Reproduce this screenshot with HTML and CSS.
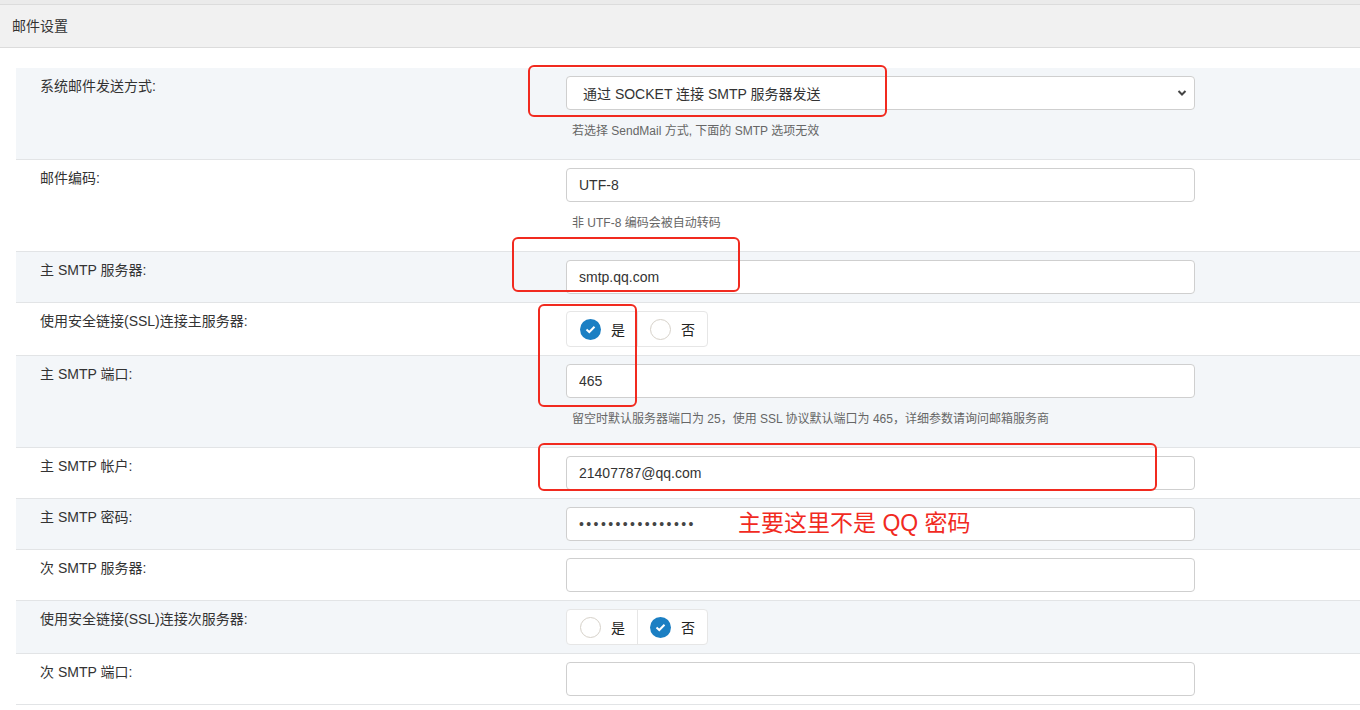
FILE: index.html
```html
<!DOCTYPE html>
<html lang="zh-CN">
<head>
<meta charset="utf-8">
<title>邮件设置</title>
<link rel="stylesheet" href="styles.css">
</head>
<body>
<div class="topstrip"></div>
<div class="panel-head">邮件设置</div>
<div class="content">
  <div class="table">
    <div class="row alt">
      <div class="label">系统邮件发送方式:</div>
      <div class="value">
        <div class="select">
          <span>通过 SOCKET 连接 SMTP 服务器发送</span>
          <svg class="chev" width="10" height="8" viewBox="0 0 10 8"><path d="M1.5 2 L5 5.5 L8.5 2" fill="none" stroke="#444" stroke-width="2"/></svg>
        </div>
        <div class="help">若选择 SendMail 方式, 下面的 SMTP 选项无效</div>
      </div>
    </div>
    <div class="row">
      <div class="label">邮件编码:</div>
      <div class="value">
        <input class="input" type="text" value="UTF-8">
        <div class="help">非 UTF-8 编码会被自动转码</div>
      </div>
    </div>
    <div class="row alt">
      <div class="label">主 SMTP 服务器:</div>
      <div class="value"><input class="input" type="text" value="smtp.qq.com"></div>
    </div>
    <div class="row">
      <div class="label">使用安全链接(SSL)连接主服务器:</div>
      <div class="value">
        <div class="seg">
          <div class="opt"><span class="radio on"><svg width="11" height="9" viewBox="0 0 11 9"><path d="M1.5 4.5 L4.3 7 L9.5 1.8" fill="none" stroke="#fff" stroke-width="2"/></svg></span>是</div>
          <div class="opt"><span class="radio"></span>否</div>
        </div>
      </div>
    </div>
    <div class="row alt">
      <div class="label">主 SMTP 端口:</div>
      <div class="value">
        <input class="input" type="text" value="465">
        <div class="help">留空时默认服务器端口为 25，使用 SSL 协议默认端口为 465，详细参数请询问邮箱服务商</div>
      </div>
    </div>
    <div class="row">
      <div class="label">主 SMTP 帐户:</div>
      <div class="value"><input class="input" type="text" value="21407787@qq.com"></div>
    </div>
    <div class="row alt">
      <div class="label">主 SMTP 密码:</div>
      <div class="value"><input class="input pw" type="password" value="abcdefghijklmnop"></div>
    </div>
    <div class="row">
      <div class="label">次 SMTP 服务器:</div>
      <div class="value"><input class="input" type="text" value=""></div>
    </div>
    <div class="row alt">
      <div class="label">使用安全链接(SSL)连接次服务器:</div>
      <div class="value">
        <div class="seg">
          <div class="opt"><span class="radio"></span>是</div>
          <div class="opt"><span class="radio on"><svg width="11" height="9" viewBox="0 0 11 9"><path d="M1.5 4.5 L4.3 7 L9.5 1.8" fill="none" stroke="#fff" stroke-width="2"/></svg></span>否</div>
        </div>
      </div>
    </div>
    <div class="row">
      <div class="label">次 SMTP 端口:</div>
      <div class="value"><input class="input" type="text" value=""></div>
    </div>
  </div>
</div>

<div class="mark mark-1"></div>
<div class="mark mark-2"></div>
<div class="mark mark-3"></div>
<div class="mark mark-4"></div>
<div class="note">主要这里不是 QQ 密码</div>
</body>
</html>
```

FILE: styles.css
```css
html, body {
  margin: 0;
  padding: 0;
  background: #fff;
  overflow: hidden;
}
body {
  font-family: "Liberation Sans", "Noto Sans CJK SC", sans-serif;
  font-size: 14px;
  color: #333;
  width: 1360px;
  height: 710px;
  position: relative;
}
.topstrip {
  height: 4px;
  background: #ebebeb;
  border-bottom: 1px solid #dcdcdc;
}
.panel-head {
  height: 42px;
  line-height: 43px;
  padding-left: 12px;
  background: #f1f1f1;
  border-bottom: 1px solid #dcdcdc;
  font-size: 14px;
  color: #333;
}
.content {
  padding: 20px 0 0 16px;
}
.row {
  display: flex;
  border-bottom: 1px solid #e2e4e6;
}
.row.alt {
  background: #f3f6f9;
}
.label {
  width: 550px;
  box-sizing: border-box;
  padding: 8px 24px;
  line-height: 20px;
  font-size: 14px;
  color: #333;
}
.value {
  padding: 8px 0;
}
.input, .select {
  box-sizing: border-box;
  width: 629px;
  height: 34px;
  border: 1px solid #cfcfcf;
  border-radius: 4px;
  background: #fff;
  padding: 0 12px;
  font-family: "Liberation Sans", "Noto Sans CJK SC", sans-serif;
  font-size: 14px;
  color: #333;
  display: block;
  margin: 0;
  outline: none;
}
.input.pw {
  font-size: 14px;
  letter-spacing: 2.4px;
  color: #444;
}
.select {
  display: flex;
  align-items: center;
  justify-content: space-between;
  padding: 0 7px 0 16px;
}
.chev {
  display: block;
}
.help {
  margin: 13px 0 11px 6px;
  font-size: 12px;
  line-height: 17px;
  color: #666;
}
.seg {
  display: flex;
  width: 142px;
  height: 36px;
  box-sizing: border-box;
  border: 1px solid #e6e6e6;
  border-radius: 4px;
  background: #fff;
}
.opt {
  flex: 1;
  display: flex;
  align-items: center;
  padding-left: 13px;
  gap: 10px;
  font-size: 14px;
  color: #222;
}
.opt + .opt {
  border-left: 1px solid #e6e6e6;
  padding-left: 12px;
}
.radio {
  width: 21px;
  height: 21px;
  box-sizing: border-box;
  border-radius: 50%;
  border: 1px solid #d6d1c9;
  background: #fff;
  display: flex;
  align-items: center;
  justify-content: center;
}
.radio.on {
  border: none;
  background: #1b7fc3;
}
.mark {
  position: absolute;
  border: 2px solid #f12a1f;
  border-radius: 6px;
  box-sizing: border-box;
}
.mark-1 { left: 528px; top: 65px; width: 359px; height: 52px; }
.mark-2 { left: 512px; top: 237px; width: 228px; height: 55px; }
.mark-3 { left: 538px; top: 304px; width: 99px; height: 103px; }
.mark-4 { left: 538px; top: 443px; width: 619px; height: 48px; }
.note {
  position: absolute;
  left: 738px;
  top: 507px;
  font-family: "Liberation Sans", "Noto Sans CJK SC", sans-serif;
  font-size: 23px;
  line-height: 32px;
  color: #f12a1f;
}
```
